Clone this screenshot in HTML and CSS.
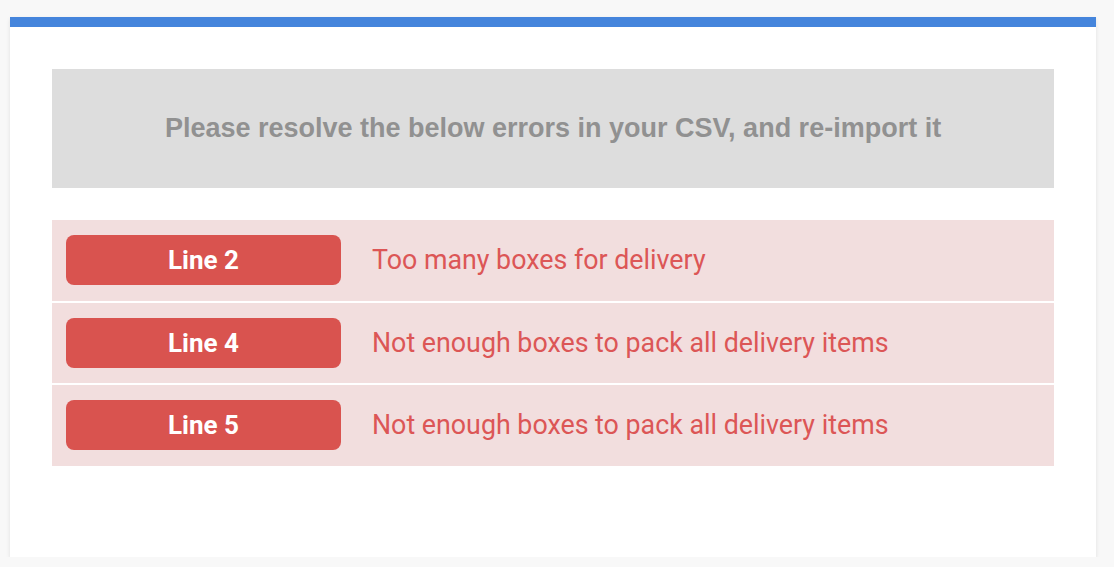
FILE: index.html
```html
<!DOCTYPE html>
<html lang="en">
<head>
<meta charset="utf-8">
<title>CSV import errors</title>
<link rel="stylesheet" href="styles.css">
</head>
<body>
<div class="card">
  <div class="card-body">
    <div class="notice">Please resolve the below errors in your CSV, and re-import it</div>
    <div class="errors">
      <div class="error-row">
        <span class="badge">Line 2</span>
        <span class="message">Too many boxes for delivery</span>
      </div>
      <div class="error-row">
        <span class="badge">Line 4</span>
        <span class="message">Not enough boxes to pack all delivery items</span>
      </div>
      <div class="error-row">
        <span class="badge">Line 5</span>
        <span class="message">Not enough boxes to pack all delivery items</span>
      </div>
    </div>
  </div>
</div>
</body>
</html>
```

FILE: styles.css
```css
html, body {
  margin: 0;
  padding: 0;
  background: #f8f8f8;
}
body {
  padding: 17px 0 0 10px;
  font-family: "Liberation Sans", Arial, sans-serif;
}
.card {
  width: 1086px;
  background: #ffffff;
  border-top: 10px solid #4585dc;
  box-shadow: 0 2px 4px rgba(0, 0, 0, 0.1);
}
.card-body {
  padding: 42px 42px 91px 42px;
}
.notice {
  height: 119px;
  background: #dddddd;
  display: flex;
  align-items: center;
  justify-content: center;
  font-weight: bold;
  font-size: 27px;
  color: #919191;
}
.errors {
  margin-top: 32px;
  display: flex;
  flex-direction: column;
  gap: 2px;
}
.error-row {
  height: 80.5px;
  background: #f2dede;
  display: flex;
  align-items: center;
  padding-left: 14px;
  gap: 31px;
}
.badge {
  width: 275px;
  height: 50px;
  border-radius: 8px;
  background: #d9534f;
  color: #ffffff;
  font-family: Roboto, "Liberation Sans", sans-serif;
  font-weight: bold;
  font-size: 26px;
  display: flex;
  align-items: center;
  justify-content: center;
}
.message {
  font-family: Roboto, "Liberation Sans", sans-serif;
  font-size: 26.8px;
  color: #dc5656;
}
```
